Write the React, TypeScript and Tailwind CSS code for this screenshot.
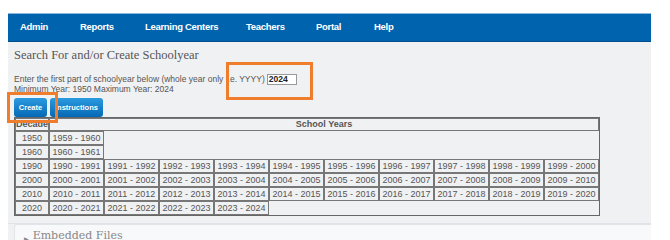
import React from "react";

const rows: [string, string[]][] = [
  ["1950", ["1959 - 1960"]],
  ["1960", ["1960 - 1961"]],
  ["1990", ["1990 - 1991","1991 - 1992","1992 - 1993","1993 - 1994","1994 - 1995","1995 - 1996","1996 - 1997","1997 - 1998","1998 - 1999","1999 - 2000"]],
  ["2000", ["2000 - 2001","2001 - 2002","2002 - 2003","2003 - 2004","2004 - 2005","2005 - 2006","2006 - 2007","2007 - 2008","2008 - 2009","2009 - 2010"]],
  ["2010", ["2010 - 2011","2011 - 2012","2012 - 2013","2013 - 2014","2014 - 2015","2015 - 2016","2016 - 2017","2017 - 2018","2018 - 2019","2019 - 2020"]],
  ["2020", ["2020 - 2021","2021 - 2022","2022 - 2023","2023 - 2024"]],
];

export default function App() {
  return (
    <div className="w-[670px] h-[240px] bg-white overflow-hidden relative" style={{ fontFamily: "'Liberation Sans', Arial, sans-serif" }}>
      <div className="ml-[8px] mt-[13px] w-[643px]">
        <div className="h-[29px] bg-[#0063ae] border-t border-t-[#8db8de] border-b border-b-[#004c8c] flex items-center pl-[12px] text-white text-[9.5px] font-semibold tracking-[-0.3px]">
          <div className="w-[60px] shrink-0">Admin</div>
          <div className="w-[65px] shrink-0">Reports</div>
          <div className="w-[101px] shrink-0">Learning Centers</div>
          <div className="w-[70px] shrink-0">Teachers</div>
          <div className="w-[58px] shrink-0">Portal</div>
          <div className="w-[50px] shrink-0">Help</div>
        </div>
        <div className="bg-[#f0f1f3] pl-[6px] pt-[5px] h-[181px]">
          <div className="text-[12.5px] leading-[16px] text-[#555]" style={{ fontFamily: "'Liberation Serif', serif" }}>
            Search For and/or Create Schoolyear
          </div>
          <div className="mt-[11px] flex items-center text-[8.5px] text-[#555] leading-[11px]">
            <span>Enter the first part of schoolyear below (whole year only i.e. YYYY)</span>
            <span className="ml-[2px] w-[30px] h-[11px] border border-[#999] bg-white text-[8.5px] leading-[9px] text-[#222] font-semibold pl-[1px]">2024</span>
          </div>
          <div className="text-[8.5px] text-[#555] leading-[10px] mt-[-1px]">Minimum Year: 1950 Maximum Year: 2024</div>
          <div className="flex gap-[3px] mt-[4px]">
            <div className="w-[33px] h-[19px] rounded-[3px] bg-gradient-to-b from-[#2a9be0] to-[#0568b4] text-white text-[7.5px] font-bold flex items-center justify-center">Create</div>
            <div className="w-[53px] h-[19px] rounded-[3px] bg-gradient-to-b from-[#2a9be0] to-[#0568b4] text-white text-[7.5px] font-bold flex items-center justify-center">Instructions</div>
          </div>
          <table className="border-separate border-spacing-0 border border-[#666] text-[9px] text-[#555] leading-[11px]">
            <thead>
              <tr>
                <th className="w-[32px] border border-[#777] font-semibold h-[12px]">Decade</th>
                <th colSpan={10} className="border border-[#777] font-bold text-[#555] h-[12px]">School Years</th>
              </tr>
            </thead>
            <tbody>
              {rows.map(([d, ys]) => (
                <tr key={d}>
                  <td className="w-[32px] h-[14px] border border-[#777] text-center font-normal">{d}</td>
                  {ys.map((y) => (
                    <td key={y} className="w-[55px] h-[14px] border border-[#777] text-center whitespace-nowrap">{y}</td>
                  ))}
                </tr>
              ))}
            </tbody>
          </table>
        </div>
        <div className="h-[1px] bg-[#dfe3e8]" />
        <div className="bg-[#f0f1f3] pl-[6px]">
          <div className="h-[20px] bg-[#f8f9fa] border-t border-l border-[#e2e5e8] rounded-tl-[3px] flex items-start pt-[5px] pl-[9px] text-[11px] text-[#888]" style={{ fontFamily: "'DejaVu Serif', serif" }}>
            <span className="text-[6px] mr-[4px] mt-[4px]">▶</span>
            <span className="leading-[12px]">Embedded Files</span>
          </div>
        </div>
      </div>
      <div className="absolute left-[226px] top-[62px] w-[87px] h-[38px] border-[3px] border-[#ef7d2b]" />
      <div className="absolute left-[7px] top-[92px] w-[51px] h-[31px] border-[3px] border-[#ef7d2b]" />
    </div>
  );
}
